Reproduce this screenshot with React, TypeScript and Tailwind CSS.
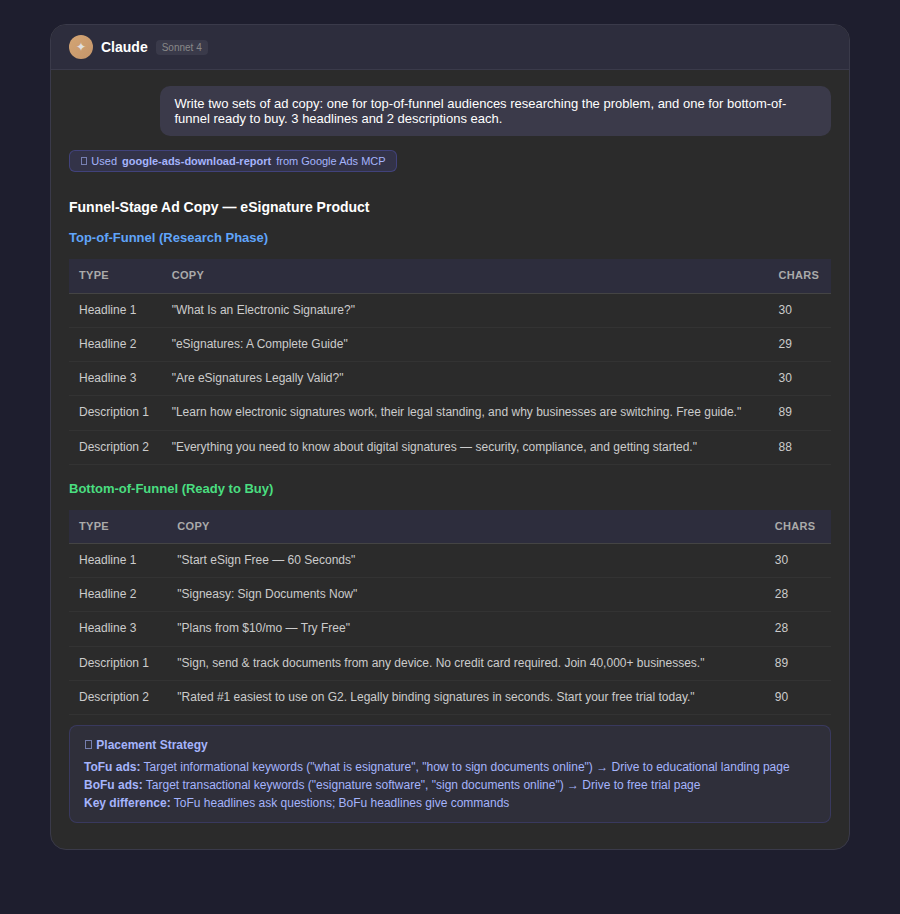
type CopyRow = {
  type: string;
  copy: string;
  chars: number;
};

const TOFU_ROWS: CopyRow[] = [
  { type: "Headline 1", copy: "What Is an Electronic Signature?", chars: 30 },
  { type: "Headline 2", copy: "eSignatures: A Complete Guide", chars: 29 },
  { type: "Headline 3", copy: "Are eSignatures Legally Valid?", chars: 30 },
  {
    type: "Description 1",
    copy: "Learn how electronic signatures work, their legal standing, and why businesses are switching. Free guide.",
    chars: 89,
  },
  {
    type: "Description 2",
    copy: "Everything you need to know about digital signatures — security, compliance, and getting started.",
    chars: 88,
  },
];

const BOFU_ROWS: CopyRow[] = [
  { type: "Headline 1", copy: "Start eSign Free — 60 Seconds", chars: 30 },
  { type: "Headline 2", copy: "Signeasy: Sign Documents Now", chars: 28 },
  { type: "Headline 3", copy: "Plans from $10/mo — Try Free", chars: 28 },
  {
    type: "Description 1",
    copy: "Sign, send & track documents from any device. No credit card required. Join 40,000+ businesses.",
    chars: 89,
  },
  {
    type: "Description 2",
    copy: "Rated #1 easiest to use on G2. Legally binding signatures in seconds. Start your free trial today.",
    chars: 90,
  },
];

function CopyTable({ rows }: { rows: CopyRow[] }) {
  return (
    <table className="my-2.5 w-full border-collapse text-[12px] leading-[19.2px]">
      <thead>
        <tr className="bg-[#2d2d3d] text-left text-[11px] leading-[17.5px] tracking-[0.3px] text-[#aaa] uppercase">
          <th className="border-b border-[#444] px-2.5 py-2 font-semibold">Type</th>
          <th className="border-b border-[#444] px-2.5 py-2 font-semibold">Copy</th>
          <th className="border-b border-[#444] px-2.5 py-2 font-semibold">Chars</th>
        </tr>
      </thead>
      <tbody className="text-[#ccc]">
        {rows.map((r) => (
          <tr key={r.type}>
            <td className="border-b border-[#333] px-2.5 py-[7px]">{r.type}</td>
            <td className="border-b border-[#333] px-2.5 py-[7px]">"{r.copy}"</td>
            <td className="border-b border-[#333] px-2.5 py-[7px]">{r.chars}</td>
          </tr>
        ))}
      </tbody>
    </table>
  );
}

export default function App() {
  return (
    <div className="min-h-screen bg-[#1e1e2e] px-[50px] py-6 font-['Liberation_Sans',Arial,sans-serif]">
      <div className="overflow-hidden rounded-2xl border border-[#3a3a4a] bg-[#2b2b2b]">
        <header className="flex items-center gap-2 border-b border-[#3a3a4a] bg-[#2d2d3d] px-[18px] py-2.5">
          <div className="flex size-6 items-center justify-center rounded-full bg-linear-135 from-[#d4a574] to-[#c4956a] text-[12px] text-[#e0e0e0]">
            ✦
          </div>
          <span className="text-[14px] font-semibold text-white">Claude</span>
          <span className="rounded bg-[#3a3a4a] px-1.5 py-0.5 text-[10px] leading-[11px] text-[#888]">
            Sonnet 4
          </span>
        </header>

        <main className="px-[18px] py-4">
          <div className="mb-3.5 ml-auto w-[88%] rounded-[10px] bg-[#3b3a4a] px-3.5 py-2.5 text-[13px] leading-[15px] text-white">
            Write two sets of ad copy: one for top-of-funnel audiences researching the problem, and one for
            bottom-of-funnel ready to buy. 3 headlines and 2 descriptions each.
          </div>

          <div className="flex w-fit items-center gap-[5px] rounded-md border border-[#6366f1]/30 bg-[#6366f1]/15 px-2.5 py-1 text-[11px] leading-[12px] text-[#a5b4fc]">
            <span>
              <i className="mr-[1.3px] ml-px inline-block h-2 w-1.5 border border-[#a5b4fc]/60" /> Used
            </span>
            <strong>google-ads-download-report</strong>
            <span>from Google Ads MCP</span>
          </div>

          <h2 className="mt-6 text-[14px] leading-[22.4px] font-semibold text-white">
            Funnel-Stage Ad Copy — eSignature Product
          </h2>

          <h3 className="mt-2.5 text-[13px] leading-[20.8px] font-semibold text-[#60a5fa]">
            Top-of-Funnel (Research Phase)
          </h3>
          <CopyTable rows={TOFU_ROWS} />

          <h3 className="mt-3.5 text-[13px] leading-[20.8px] font-semibold text-[#4ade80]">
            Bottom-of-Funnel (Ready to Buy)
          </h3>
          <CopyTable rows={BOFU_ROWS} />

          <div className="mb-2.5 rounded-lg border border-[#6366f1]/20 bg-[#6366f1]/8 px-3.5 py-2.5 text-[12px] leading-[18px] text-[#a5b4fc]">
            <p className="mb-1 font-bold">
              <i className="mr-px ml-px inline-block h-[9px] w-[7px] border border-[#a5b4fc]/60" /> Placement
              Strategy
            </p>
            <p>
              <strong>ToFu ads:</strong> Target informational keywords ("what is esignature", "how to sign
              documents online") → Drive to educational landing page
            </p>
            <p>
              <strong>BoFu ads:</strong> Target transactional keywords ("esignature software", "sign documents
              online") → Drive to free trial page
            </p>
            <p>
              <strong>Key difference:</strong> ToFu headlines ask questions; BoFu headlines give commands
            </p>
          </div>
        </main>
      </div>
    </div>
  );
}
